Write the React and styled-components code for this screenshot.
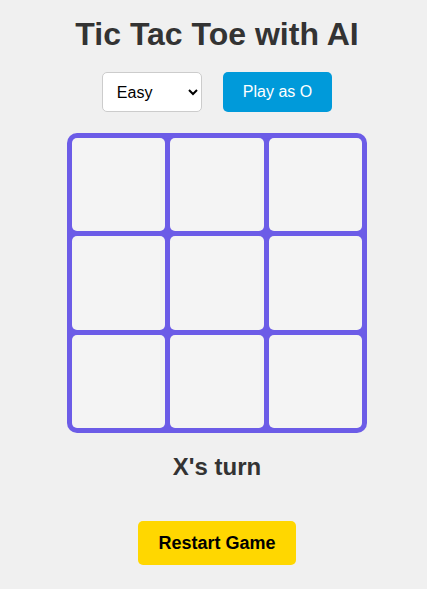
import React, { useState } from "react";
import styled, { createGlobalStyle } from "styled-components";

const GlobalStyle = createGlobalStyle`
  body {
    margin: 0;
    background: #f0f0f0;
    font-family: "Liberation Sans", Arial, sans-serif;
  }
`;

const Page = styled.div`
  display: flex;
  flex-direction: column;
  align-items: center;
  padding: 16px 0 0 7px;
`;

const Title = styled.h1`
  margin: 0;
  font-size: 32px;
  color: #333;
  line-height: 37px;
`;

const Controls = styled.div`
  display: flex;
  gap: 21px;
  margin-top: 19px;
`;

const Select = styled.select`
  width: 100px;
  height: 40px;
  padding: 0 10px;
  font-family: "Liberation Sans", Arial, sans-serif;
  font-size: 16px;
  color: #000;
  background: #fff;
  border: 1px solid #ccc;
  border-radius: 5px;
`;

const Button = styled.button`
  height: ${(p) => p.$height}px;
  padding: 0 20px;
  border: none;
  border-radius: 5px;
  background: ${(p) => p.$bg};
  color: ${(p) => p.$color};
  font-family: "Liberation Sans", Arial, sans-serif;
  font-size: ${(p) => p.$size}px;
  font-weight: ${(p) => (p.$bold ? "bold" : "normal")};
  cursor: pointer;
`;

const Board = styled.div`
  display: grid;
  grid-template-columns: repeat(3, 1fr);
  grid-template-rows: repeat(3, 1fr);
  gap: 5px;
  width: 300px;
  height: 300px;
  box-sizing: border-box;
  padding: 5px;
  margin-top: 21px;
  background: #6c5ce7;
  border-radius: 10px;
`;

const Cell = styled.div`
  background: #f4f4f4;
  border-radius: 5px;
  display: flex;
  align-items: center;
  justify-content: center;
  font-size: 48px;
  font-weight: bold;
  color: #333;
`;

const Status = styled.div`
  margin-top: 20px;
  font-size: 24px;
  font-weight: bold;
  line-height: 28px;
  color: #333;
`;

const Footer = styled.div`
  margin-top: 40px;
`;

export default function App() {
  const [cells] = useState(Array(9).fill(""));
  return (
    <>
      <GlobalStyle />
      <Page>
        <Title>Tic Tac Toe with AI</Title>
        <Controls>
          <Select defaultValue="easy">
            <option value="easy">Easy</option>
            <option value="medium">Medium</option>
            <option value="hard">Hard</option>
          </Select>
          <Button $height={40} $bg="#009ada" $color="#fff" $size={16}>
            Play as O
          </Button>
        </Controls>
        <Board>
          {cells.map((c, i) => (
            <Cell key={i}>{c}</Cell>
          ))}
        </Board>
        <Status>X's turn</Status>
        <Footer>
          <Button $height={44} $bg="#ffd700" $color="#000" $size={18} $bold>
            Restart Game
          </Button>
        </Footer>
      </Page>
    </>
  );
}
